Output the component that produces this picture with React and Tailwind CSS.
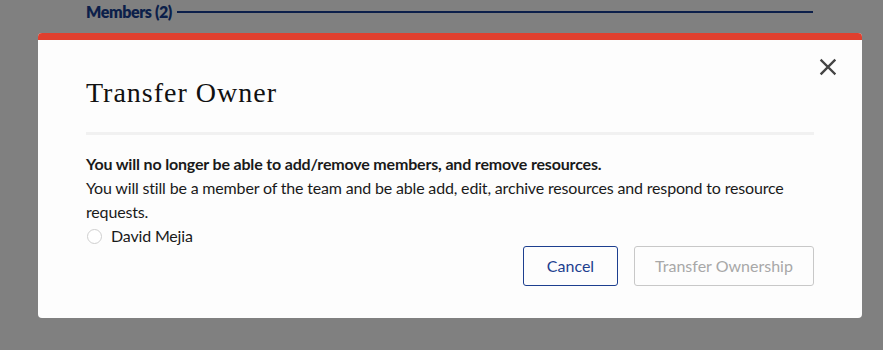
import React from "react";

export default function App() {
  return (
    <div className="relative h-[350px] w-[883px] overflow-hidden bg-[#808080]" style={{ fontFamily: "Lato, 'Noto Sans', sans-serif" }}>
      <div className="flex items-center gap-[5px] pl-[86px] pr-[70px] pt-[3px]">
        <span className="text-[16px] font-extrabold leading-[18px] text-[#0c1f4a]" style={{ letterSpacing: "-0.4px" }}>Members (2)</span>
        <div className="h-[2px] flex-1 bg-[#0c1f4a]" />
      </div>
      <div className="absolute left-[38px] top-[33px] w-[824px] overflow-hidden rounded-[4px] bg-[#fdfdfd]">
        <div className="h-[7px] bg-[#e03f2e]" />
        <div className="relative px-[48px] pb-[32px] pt-[35px]">
          <button className="absolute right-[24px] top-[17px] flex h-[20px] w-[20px] items-center justify-center text-[#444]">
            <svg width="18" height="18" viewBox="0 0 18 18" fill="none" stroke="currentColor" strokeWidth="2.4" strokeLinecap="square">
              <path d="M2.5 2.5 L15.5 15.5 M15.5 2.5 L2.5 15.5" />
            </svg>
          </button>
          <h2 className="text-[28px] leading-[36px] text-[#111]" style={{ fontFamily: "'Liberation Serif', serif", letterSpacing: "1px" }}>Transfer Owner</h2>
          <div className="mt-[21px] h-[3px] bg-[#f1f1f1]" />
          <div className="mt-[17px] text-[16px] leading-[24px] text-[#1a1a1a]" style={{ letterSpacing: "-0.17px" }}>
            <p className="font-bold">You will no longer be able to add/remove members, and remove resources.</p>
            <p>You will still be a member of the team and be able add, edit, archive resources and respond to resource requests.</p>
            <label className="flex items-center gap-[9px] pl-[1px]">
              <span className="h-[15px] w-[15px] rounded-full border border-[#cfcfcf] bg-white" />
              <span>David Mejia</span>
            </label>
          </div>
          <div className="-mt-[2px] flex justify-end gap-[16px]">
            <button className="h-[40px] w-[95px] rounded-[3px] border border-[#1d3f8f] text-[16px] text-[#1d3f8f]">Cancel</button>
            <button className="h-[40px] w-[180px] rounded-[3px] border border-[#c8c8c8] text-[16px] text-[#a8a8a8]">Transfer Ownership</button>
          </div>
        </div>
      </div>
    </div>
  );
}
